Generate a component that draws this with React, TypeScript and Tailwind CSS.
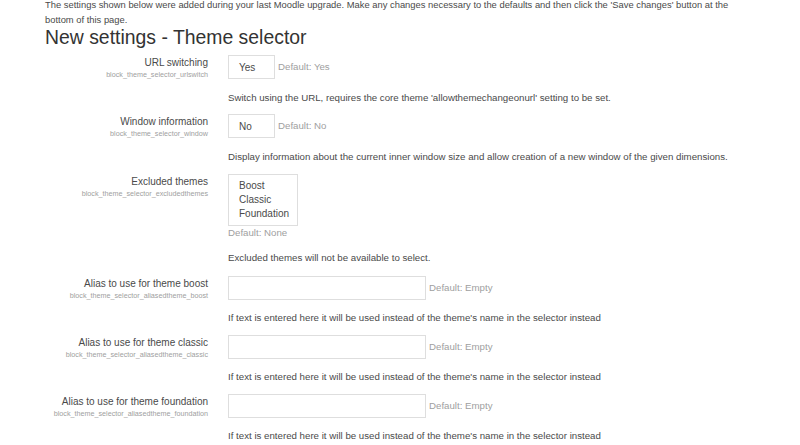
import React from "react";

type RowProps = {
  label: string;
  sub: string;
  control: React.ReactNode;
  desc: string;
  mb?: string;
  mt?: string;
};

function Row({ label, sub, control, desc, mb = "mb-[10px]", mt = "mt-[11px]" }: RowProps) {
  return (
    <div className={`flex ${mb}`}>
      <div className="w-[163px] shrink-0 text-right pt-[1px]">
        <div className="text-[10px] leading-[14px] text-[#4a4a4a]">{label}</div>
        <div className="text-[7.2px] leading-[10px] text-[#a0a0a0]">{sub}</div>
      </div>
      <div className="ml-[20px]">
        {control}
        <div className={`${mt} text-[9.7px] leading-[14px] text-[#4a4a4a] whitespace-nowrap`}>{desc}</div>
      </div>
    </div>
  );
}

function SelectBox({ value, def }: { value: string; def: string }) {
  return (
    <div className="flex items-center h-[24px]">
      <div className="w-[47px] h-[24px] border border-[#dedede] flex items-center pl-[10px] text-[10px] text-[#4a4a4a]">
        {value}
      </div>
      <div className="ml-[3px] text-[9.7px] text-[#a0a0a0]">{def}</div>
    </div>
  );
}

function TextBox() {
  return (
    <div className="flex items-center h-[24px]">
      <div className="w-[198px] h-[24px] border border-[#dedede]" />
      <div className="ml-[3px] text-[9.7px] text-[#a0a0a0]">Default: Empty</div>
    </div>
  );
}

function MultiBox() {
  return (
    <div>
      <div className="w-[70px] h-[52px] border border-[#dedede] pt-[4px] pl-[10px] text-[10px] leading-[14px] text-[#4a4a4a]">
        <div>Boost</div>
        <div>Classic</div>
        <div>Foundation</div>
      </div>
      <div className="text-[9.7px] leading-[14px] text-[#a0a0a0]">Default: None</div>
    </div>
  );
}

export default function App() {
  const aliasDesc =
    "If text is entered here it will be used instead of the theme's name in the selector instead";
  return (
    <div
      className="w-[800px] h-[445px] overflow-hidden bg-white pl-[45px]"
      style={{ fontFamily: '"Liberation Sans", Arial, sans-serif' }}
    >
      <div className="-mt-[3px]">
        <p className="text-[9.4px] leading-[15px] text-[#4a4a4a]">
          The settings shown below were added during your last Moodle upgrade. Make any changes necessary to the
          defaults and then click the 'Save changes' button at the
          <br />
          bottom of this page.
        </p>
        <h2 className="-mt-[1px] text-[19.4px] leading-[23px] text-[#333] mb-[6px]">New settings - Theme selector</h2>
        <Row
          label="URL switching"
          sub="block_theme_selector_urlswitch"
          control={<SelectBox value="Yes" def="Default: Yes" />}
          desc="Switch using the URL, requires the core theme 'allowthemechangeonurl' setting to be set."
          mt="mt-[12px]"
          mb="mb-[9px]"
        />
        <Row
          label="Window information"
          sub="block_theme_selector_window"
          control={<SelectBox value="No" def="Default: No" />}
          desc="Display information about the current inner window size and allow creation of a new window of the given dimensions."
          mt="mt-[12px]"
          mb="mb-[10px]"
        />
        <Row
          label="Excluded themes"
          sub="block_theme_selector_excludedthemes"
          control={<MultiBox />}
          desc="Excluded themes will not be available to select."
          mb="mb-[11px]"
        />
        <Row
          label="Alias to use for theme boost"
          sub="block_theme_selector_aliasedtheme_boost"
          control={<TextBox />}
          desc={aliasDesc}
        />
        <Row
          label="Alias to use for theme classic"
          sub="block_theme_selector_aliasedtheme_classic"
          control={<TextBox />}
          desc={aliasDesc}
        />
        <Row
          label="Alias to use for theme foundation"
          sub="block_theme_selector_aliasedtheme_foundation"
          control={<TextBox />}
          desc={aliasDesc}
        />
      </div>
    </div>
  );
}
